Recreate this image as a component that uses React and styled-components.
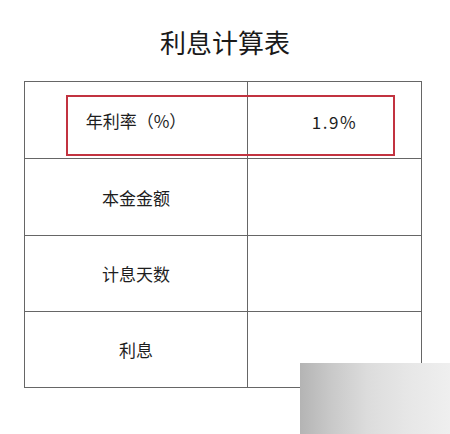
import React from "react";
import styled, { createGlobalStyle } from "styled-components";

const rows = [
  { label: "年利率（%）", value: "1.9%", marked: true, height: 77 },
  { label: "本金金额", value: "", height: 77 },
  { label: "计息天数", value: "", height: 76 },
  { label: "利息", value: "", height: 76 }
];

export default function App() {
  return (
    <Page>
      <GlobalStyle />
      <Title>利息计算表</Title>
      <Table>
        {rows.map(row => (
          <Row key={row.label} $h={row.height}>
            <LabelCell>{row.label}</LabelCell>
            <ValueCell>{row.value}</ValueCell>
            {row.marked && <Mark />}
          </Row>
        ))}
      </Table>
      <Smudge />
    </Page>
  );
}

const GlobalStyle = createGlobalStyle`
  html, body {
    margin: 0;
    background: #fff;
  }
  body {
    font-family: "Noto Sans CJK SC", "Noto Sans", sans-serif;
    color: #1e1e1e;
  }
`;

const Page = styled.div`
  position: relative;
  width: 450px;
  height: 434px;
  overflow: hidden;
  padding-top: 26px;
  box-sizing: border-box;
`;

const Title = styled.h1`
  margin: 0;
  height: 32px;
  line-height: 32px;
  font-size: 26px;
  font-weight: 400;
  text-align: center;
  color: #1a1a1a;
`;

const Table = styled.div`
  margin: 23px 0 0 24px;
  width: 398px;
  border-top: 1px solid #666;
  border-left: 1px solid #666;
  box-sizing: border-box;
`;

const Row = styled.div`
  position: relative;
  display: grid;
  grid-template-columns: 223px 174px;
  height: ${p => p.$h}px;
`;

const Cell = styled.div`
  display: flex;
  align-items: center;
  justify-content: center;
  border-right: 1px solid #666;
  border-bottom: 1px solid #666;
  font-size: 17px;
  color: #1e1e1e;
`;

const LabelCell = styled(Cell)``;

const ValueCell = styled(Cell)`
  letter-spacing: 1.5px;
  padding-top: 2px;
`;

const Mark = styled.div`
  position: absolute;
  left: 41px;
  top: 13px;
  width: 329px;
  height: 61px;
  border: 2px solid #c23340;
  box-sizing: border-box;
  pointer-events: none;
`;

const Smudge = styled.div`
  position: absolute;
  right: 0;
  bottom: 0;
  width: 150px;
  height: 71px;
  background: linear-gradient(
    90deg,
    #b4b4b4 0%,
    #c8c8c8 20%,
    #dcdcdc 45%,
    #e6e6e6 70%,
    #efefef 100%
  );
`;
